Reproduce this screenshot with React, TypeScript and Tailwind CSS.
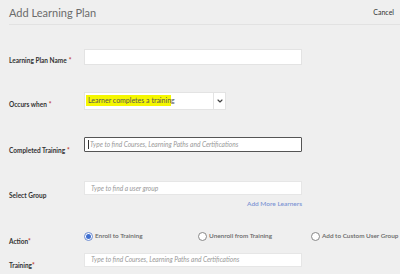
import { ChevronDown } from 'lucide-react';

function Label({ text, star = true, tight = false }: { text: string; star?: boolean; tight?: boolean }) {
  return (
    <div className="w-[75px] shrink-0 whitespace-nowrap text-[6.5px] font-bold text-[#333] leading-none">
      {text}
      {star && <span className={`text-[#c0392b] ${tight ? '' : 'ml-[2px]'}`}>*</span>}
    </div>
  );
}

function Radio({ label, checked = false }: { label: string; checked?: boolean }) {
  return (
    <div className="flex items-center gap-[2px] whitespace-nowrap">
      <span
        className={`flex h-[9px] w-[9px] items-center justify-center rounded-full border bg-white ${
          checked ? 'border-[#6a8ad0]' : 'border-[#888]'
        }`}
      >
        {checked && <span className="h-[5px] w-[5px] rounded-full bg-[#3f6fd1]" />}
      </span>
      <span className="text-[6.4px] font-semibold text-[#666] leading-none">{label}</span>
    </div>
  );
}

export default function App() {
  return (
    <div className="h-[274px] w-[400px] overflow-hidden bg-[#efefef] font-['Lato',sans-serif]">
      {/* Header */}
      <div className="flex h-[24px] items-center justify-between pl-[9px] pr-[6px] pt-[1px]">
        <h1 className="text-[11px] text-[#6b6b6b] leading-none">Add Learning Plan</h1>
        <button className="text-[7px] text-[#333] leading-none">Cancel</button>
      </div>
      <div className="ml-[9px] h-px bg-[#e2e2e2]" />

      <div className="pl-[9px]">
        {/* Learning Plan Name */}
        <div className="mt-[24px] flex items-end">
          <div className="pb-[1px]"><Label text="Learning Plan Name" /></div>
          <input className="h-[16px] w-[218px] border border-[#e3e3e3] bg-white outline-none" />
        </div>

        {/* Occurs when */}
        <div className="mt-[27px] flex items-end">
          <div className="pb-[2px]"><Label text="Occurs when" /></div>
          <div className="flex h-[18px] w-[142px] border border-[#e3e3e3] bg-white">
            <div className="flex-1 pl-[1px] pt-[2px]">
              <div className="w-[85px] whitespace-nowrap bg-[#f5f700] py-[2px] pl-[2px] text-[7px] text-[#555] leading-none">
                Learner completes a training
              </div>
            </div>
            <div className="flex w-[12px] items-center justify-center border-l border-[#e3e3e3]">
              <ChevronDown size={8} strokeWidth={3.5} color="#444" />
            </div>
          </div>
        </div>

        {/* Completed Training */}
        <div className="mt-[27px] flex items-end">
          <div className="-mb-[2px]"><Label text="Completed Training" /></div>
          <div className="flex h-[15px] w-[218px] items-center rounded-[1px] border-[1.5px] border-[#555] bg-white pl-[3px]">
            <span className="mr-[1px] h-[9px] w-px bg-[#333]" />
            <span className="whitespace-nowrap text-[6.6px] italic text-[#999] leading-none">
              Type to find Courses, Learning Paths and Certifications
            </span>
          </div>
        </div>

        {/* Select Group */}
        <div className="mt-[29px] flex items-end">
          <div className="-mb-[4px]"><Label text="Select Group" star={false} /></div>
          <div className="flex h-[14px] w-[218px] items-center border border-[#e6e6e6] bg-white pl-[6px]">
            <span className="whitespace-nowrap text-[6.6px] italic text-[#999] leading-none">Type to find a user group</span>
          </div>
        </div>
        <div className="flex w-[293px] justify-end pt-[6px]">
          <span className="text-[6.5px] font-semibold text-[#7d95d4] leading-none">Add More Learners</span>
        </div>

        {/* Action */}
        <div className="mt-[24px] flex items-end">
          <div className="-mb-[5px]"><Label text="Action" tight /></div>
          <div className="flex">
            <div className="w-[114px]"><Radio label="Enroll to Training" checked /></div>
            <div className="w-[113px]"><Radio label="Unenroll from Training" /></div>
            <Radio label="Add to Custom User Group" />
          </div>
        </div>

        {/* Training */}
        <div className="mt-[12px] flex items-end">
          <div className="-mb-[3px]"><Label text="Training" tight /></div>
          <div className="flex h-[14px] w-[218px] items-center border border-[#e6e6e6] bg-white pl-[6px]">
            <span className="whitespace-nowrap text-[6.6px] italic text-[#999] leading-none">
              Type to find Courses, Learning Paths and Certifications
            </span>
          </div>
        </div>
      </div>
    </div>
  );
}
